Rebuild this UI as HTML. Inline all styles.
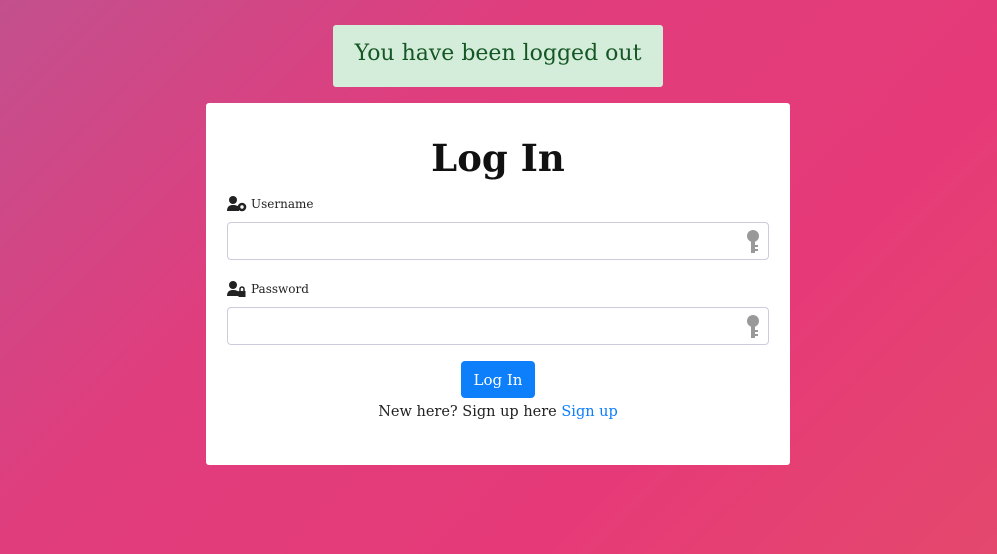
<!DOCTYPE html>
<html><head><style>
html,body{margin:0;padding:0}
body{width:997px;height:554px;overflow:hidden;background:linear-gradient(135deg,#c3508e 0%,#e03d7d 35%,#e63a78 70%,#e4486d 100%);font-family:"DejaVu Serif","Liberation Serif",serif;position:relative}
.alert{position:absolute;left:333px;top:25px;width:330px;height:62px;background:#d4edda;border-radius:3px;color:#155724;font-size:22px;line-height:58px;text-align:center}
.card{position:absolute;left:206px;top:103px;width:584px;height:362px;background:#fff;border-radius:3px}
h1{margin:0;position:absolute;top:30px;left:0;width:100%;text-align:center;font-size:37px;font-weight:bold;line-height:50px;color:#111}
.lbl{position:absolute;left:21px;font-size:12px;color:#222;display:flex;align-items:center;gap:4px}
.inp{position:absolute;left:21px;width:540px;height:36px;border:1px solid #ccd;border-radius:4px}
.key{position:absolute;right:8px;top:7px}
.btn{position:absolute;left:255px;top:258px;width:74px;height:37px;background:#0d7ffb;border-radius:4px;color:#fff;font-size:15px;line-height:39px;text-align:center}
.foot{position:absolute;top:301px;width:100%;text-align:center;font-size:14.5px;color:#222}
.foot span{color:#0d7ffb}
</style></head><body>
<div class="alert">You have been logged out</div>
<div class="card">
<h1>Log In</h1>
<div class="lbl" style="top:93px"><svg width="20" height="16" viewBox="0 0 20 16"><circle cx="6" cy="4" r="4" fill="#222"/><path d="M0 15c0-5 3-6 6-6s5 1 6 2v4z" fill="#222"/><circle cx="15" cy="11" r="3" fill="none" stroke="#222" stroke-width="2.6"/></svg>Username</div>
<div class="inp" style="top:119px"><svg class="key" width="14" height="24" viewBox="0 0 14 24"><circle cx="7" cy="6" r="6" fill="#999"/><rect x="5" y="10" width="4" height="13" fill="#999"/><rect x="9" y="15" width="3" height="2" fill="#999"/><rect x="9" y="19" width="3" height="2" fill="#999"/></svg></div>
<div class="lbl" style="top:178px"><svg width="20" height="16" viewBox="0 0 20 16"><circle cx="6" cy="4" r="4" fill="#222"/><path d="M0 15c0-5 3-6 6-6s5 1 6 2v4z" fill="#222"/><rect x="11.5" y="10" width="7" height="6" fill="#222"/><path d="M13 10V8a2 2 0 0 1 4 0v2" fill="none" stroke="#222" stroke-width="1.5"/></svg>Password</div>
<div class="inp" style="top:204px"><svg class="key" width="14" height="24" viewBox="0 0 14 24"><circle cx="7" cy="6" r="6" fill="#999"/><rect x="5" y="10" width="4" height="13" fill="#999"/><rect x="9" y="15" width="3" height="2" fill="#999"/><rect x="9" y="19" width="3" height="2" fill="#999"/></svg></div>
<div class="btn">Log In</div>
<div class="foot">New here? Sign up here <span>Sign up</span></div>
</div>
</body></html>
